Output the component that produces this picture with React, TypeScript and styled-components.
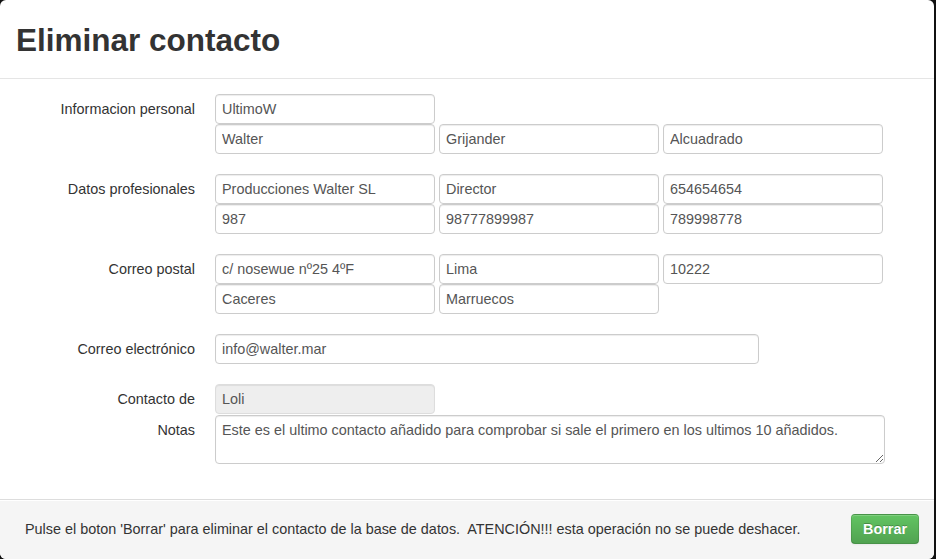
import React from "react";
import styled, { createGlobalStyle } from "styled-components";

const GlobalStyle = createGlobalStyle`
  html, body {
    margin: 0;
    padding: 0;
    background: #111;
  }
  body {
    font-family: "Liberation Sans", Arial, Helvetica, sans-serif;
    font-size: 14.4px;
    line-height: 20px;
    color: #333;
  }
  * { box-sizing: border-box; }
`;

const Modal = styled.div`
  width: 934px;
  height: 559px;
  background: #fff;
  border-radius: 6px;
  display: flex;
  flex-direction: column;
  overflow: hidden;
`;

const Header = styled.div`
  padding: 20px 16px 18px;
  border-bottom: 1px solid #e5e5e5;
`;

const Title = styled.h3`
  margin: 0;
  font-size: 31.5px;
  line-height: 40px;
  font-weight: bold;
  color: #333;
`;

const Body = styled.div`
  flex: 1;
  padding: 15px 0 0;
`;

const Group = styled.div<{ $mb?: number }>`
  display: grid;
  grid-template-columns: 195px 1fr;
  column-gap: 20px;
  margin-bottom: ${(p) => (p.$mb ?? 20)}px;
`;

const Label = styled.label`
  text-align: right;
  padding-top: 5px;
  line-height: 20px;
  color: #333;
`;

const Controls = styled.div`
  display: flex;
  flex-direction: column;
`;

const Row = styled.div`
  display: flex;
  gap: 4px;
`;

const Input = styled.input<{ $w?: number }>`
  width: ${(p) => p.$w ?? 220}px;
  height: 30px;
  padding: 4px 6px;
  margin: 0;
  font-family: inherit;
  font-size: 14.4px;
  line-height: 20px;
  color: #555;
  background: #fff;
  border: 1px solid #ccc;
  border-radius: 4px;
  box-shadow: inset 0 1px 1px rgba(0, 0, 0, 0.075);
  outline: none;
  &:disabled {
    background: #eee;
    border-color: #ddd;
    color: #555;
    opacity: 1;
    -webkit-text-fill-color: #555;
  }
`;

const TextArea = styled.textarea`
  width: 670px;
  height: 49px;
  margin: 1px 0 0;
  padding: 4px 6px;
  font-family: inherit;
  font-size: 14.4px;
  line-height: 20px;
  color: #555;
  border: 1px solid #ccc;
  border-radius: 4px;
  box-shadow: inset 0 1px 1px rgba(0, 0, 0, 0.075);
  outline: none;
`;

const NotesLabel = styled(Label)`
  padding-top: 6px;
`;

const Footer = styled.div`
  display: flex;
  align-items: center;
  justify-content: space-between;
  padding: 14px 15px 15px 25px;
  background: #f5f5f5;
  border-top: 1px solid #ddd;
  box-shadow: inset 0 1px 0 #fff;
`;

const FooterText = styled.p`
  margin: 0;
  white-space: pre;
  color: #333;
`;

const Button = styled.button`
  height: 30px;
  padding: 4px 11px;
  font-family: inherit;
  font-size: 14.4px;
  font-weight: bold;
  line-height: 20px;
  color: #fff;
  text-shadow: 0 -1px 0 rgba(0, 0, 0, 0.25);
  background-image: linear-gradient(to bottom, #62c462, #51a351);
  border: 1px solid rgba(0, 0, 0, 0.1);
  border-bottom-color: rgba(0, 0, 0, 0.25);
  border-radius: 4px;
  box-shadow: inset 0 1px 0 rgba(255, 255, 255, 0.2), 0 1px 2px rgba(0, 0, 0, 0.05);
  cursor: pointer;
`;

export default function App() {
  return (
    <>
      <GlobalStyle />
      <Modal>
        <Header>
          <Title>Eliminar contacto</Title>
        </Header>
        <Body>
          <Group>
            <Label>Informacion personal</Label>
            <Controls>
              <Row>
                <Input readOnly defaultValue="UltimoW" />
              </Row>
              <Row>
                <Input readOnly defaultValue="Walter" />
                <Input readOnly defaultValue="Grijander" />
                <Input readOnly defaultValue="Alcuadrado" />
              </Row>
            </Controls>
          </Group>
          <Group>
            <Label>Datos profesionales</Label>
            <Controls>
              <Row>
                <Input readOnly defaultValue="Producciones Walter SL" />
                <Input readOnly defaultValue="Director" />
                <Input readOnly defaultValue="654654654" />
              </Row>
              <Row>
                <Input readOnly defaultValue="987" />
                <Input readOnly defaultValue="98777899987" />
                <Input readOnly defaultValue="789998778" />
              </Row>
            </Controls>
          </Group>
          <Group>
            <Label>Correo postal</Label>
            <Controls>
              <Row>
                <Input readOnly defaultValue="c/ nosewue nº25 4ºF" />
                <Input readOnly defaultValue="Lima" />
                <Input readOnly defaultValue="10222" />
              </Row>
              <Row>
                <Input readOnly defaultValue="Caceres" />
                <Input readOnly defaultValue="Marruecos" />
              </Row>
            </Controls>
          </Group>
          <Group>
            <Label>Correo electrónico</Label>
            <Controls>
              <Row>
                <Input $w={544} readOnly defaultValue="info@walter.mar" />
              </Row>
            </Controls>
          </Group>
          <Group $mb={0}>
            <Label>Contacto de</Label>
            <Controls>
              <Row>
                <Input disabled defaultValue="Loli" />
              </Row>
            </Controls>
          </Group>
          <Group $mb={0}>
            <NotesLabel>Notas</NotesLabel>
            <Controls>
              <TextArea
                readOnly
                defaultValue="Este es el ultimo contacto añadido para comprobar si sale el primero en los ultimos 10 añadidos."
              />
            </Controls>
          </Group>
        </Body>
        <Footer>
          <FooterText>
            {"Pulse el boton 'Borrar' para eliminar el contacto de la base de datos.  ATENCIÓN!!! esta operación no se puede deshacer."}
          </FooterText>
          <Button>Borrar</Button>
        </Footer>
      </Modal>
    </>
  );
}
